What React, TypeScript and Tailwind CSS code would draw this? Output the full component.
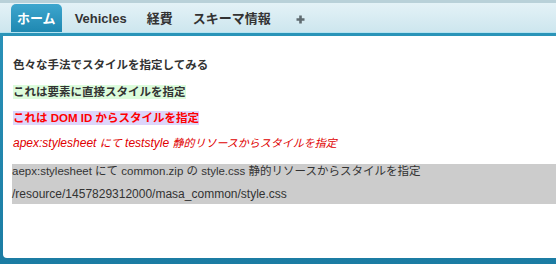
const jp = { fontFamily: '"Liberation Sans", "Noto Sans CJK JP", sans-serif' };

const tabs = [
  { label: "Vehicles", gap: "ml-[13px]" },
  { label: "経費", gap: "ml-[20px]" },
  { label: "スキーマ情報", gap: "ml-[20px]" },
];

export default function App() {
  return (
    <div
      className="w-[556px] h-[264px] flex flex-col overflow-hidden bg-gradient-to-b from-[#2b94bb] to-[#1b7ca3]"
      style={jp}
    >
      {/* tab bar */}
      <div className="h-[33px] shrink-0 border-t-[3px] border-[#b9d1d9] bg-gradient-to-b from-[#e4f2f7] to-[#cde6ee] flex items-end pl-[11px] border-b border-b-[#b4e3f1]">
        <div className="h-[28px] pt-[2px] px-[6px] flex items-center rounded-t-[5px] bg-gradient-to-b from-[#3da6ce] to-[#1e88b1] text-white font-bold text-[13px]">
          ホーム
        </div>
        {tabs.map((t) => (
          <div
            key={t.label}
            className={`${t.gap} h-[28px] pt-[2px] flex items-center text-[#333] font-bold text-[13px]`}
          >
            {t.label}
          </div>
        ))}
        <div className="ml-[25px] h-[28px] pt-[2px] flex items-center">
          <svg width="9" height="9" viewBox="0 0 9 9">
            <path d="M4.5 0.5v8M0.5 4.5h8" stroke="#5f6b70" strokeWidth="2.6" />
          </svg>
        </div>
      </div>
      <div className="h-[3px] shrink-0 bg-[#2a94b8]" />

      {/* body */}
      <div className="flex-1 ml-[3px] mb-[6px] bg-white rounded-bl-[4px] pl-[10px] text-[12px]">
        <div className="mt-[21px] leading-[16px] font-bold text-[#333] text-[11.5px]">
          色々な手法でスタイルを指定してみる
        </div>
        <div className="mt-[12px] w-fit leading-[14px] font-bold text-[#333] bg-[#dcfcdc] text-[11.5px]">
          これは要素に直接スタイルを指定
        </div>
        <div className="mt-[12px] w-fit leading-[14px] font-bold text-[#f00] bg-[#ddd6fb] text-[11.5px]">
          これは DOM ID からスタイルを指定
        </div>
        <div className="mt-[10px] leading-[16px] italic text-[#e00000]">
          apex:stylesheet <span className="text-[11px]">にて</span> teststyle{" "}
          <span className="text-[11px]">静的リソースからスタイルを指定</span>
        </div>
        <div className="mt-[13px] -ml-px bg-[#cccccc] text-[#333] pb-[2px]">
          <div className="leading-[15px] text-[11.5px]">
            aepx:stylesheet にて common.zip の style.css 静的リソースからスタイルを指定
          </div>
          <div className="mt-[8px] leading-[15px]">/resource/1457829312000/masa_common/style.css</div>
        </div>
      </div>
    </div>
  );
}
